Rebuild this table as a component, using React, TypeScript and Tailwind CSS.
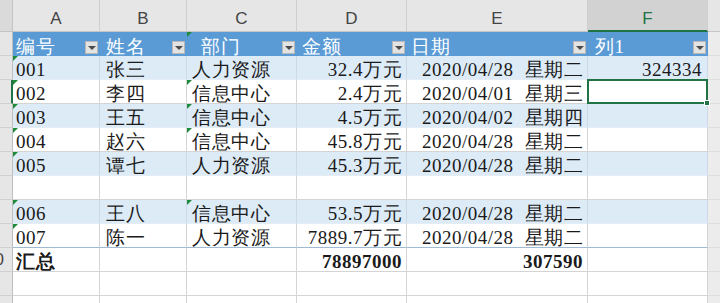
import React from "react";

type Row = {
  no: string;
  name: string;
  dept: string;
  amount: string;
  date: string;
  week: string;
  extra: string;
  band: boolean;
};

const rows: (Row | null)[] = [
  { no: "001", name: "张三", dept: "人力资源", amount: "32.4万元", date: "2020/04/28", week: "星期二", extra: "324334", band: true },
  { no: "002", name: "李四", dept: "信息中心", amount: "2.4万元", date: "2020/04/01", week: "星期三", extra: "", band: false },
  { no: "003", name: "王五", dept: "信息中心", amount: "4.5万元", date: "2020/04/02", week: "星期四", extra: "", band: true },
  { no: "004", name: "赵六", dept: "信息中心", amount: "45.8万元", date: "2020/04/28", week: "星期二", extra: "", band: false },
  { no: "005", name: "谭七", dept: "人力资源", amount: "45.3万元", date: "2020/04/28", week: "星期二", extra: "", band: true },
  null,
  { no: "006", name: "王八", dept: "信息中心", amount: "53.5万元", date: "2020/04/28", week: "星期二", extra: "", band: true },
  { no: "007", name: "陈一", dept: "人力资源", amount: "7889.7万元", date: "2020/04/28", week: "星期二", extra: "", band: false },
];

const GRID = "grid grid-cols-[13px_87px_87px_110px_110px_181px_120px_12px]";
const FONT = "[font-family:'Liberation_Serif',serif] text-[19px] tracking-[0.5px] text-[#1a1a1a]";
const SANS = "[font-family:'Liberation_Sans',sans-serif]";
const CELL = "relative h-[24px] border-r border-b whitespace-nowrap pt-[4px] leading-[20px]";
const ALIGN = ["pl-[3px]", "pl-[6px]", "pl-[5px]", "text-right pr-[4px]", "text-right pr-[4px]", "text-right pr-[5px]"];
const HEAD_PAD = ["pl-[3px]", "pl-[6px]", "pl-[14px]", "pl-[5px]", "pl-[4px]", "pl-[7px]"];

function Flag() {
  return <span className="absolute left-0 top-0 w-0 h-0 border-t-[5px] border-t-[#1f8a3b] border-r-[5px] border-r-transparent" />;
}

function FilterButton() {
  return (
    <span className="absolute right-[1px] bottom-[1px] w-[13px] h-[13px] bg-[#e3e3e3] border border-[#b8b8b8] flex items-center justify-center">
      <span className="w-0 h-0 border-l-[4px] border-r-[4px] border-t-[4px] border-l-transparent border-r-transparent border-t-[#4a4a4a]" />
    </span>
  );
}

function RowHead({ label, active }: { label?: string; active?: boolean }) {
  return (
    <div
      className={`h-[24px] flex justify-end border-b border-b-[#d0d0d0] bg-[#e6e6e6] overflow-hidden pr-[8px] pt-[2px] leading-[20px] text-[17px] tracking-normal text-[#444] ${SANS} ${
        active ? "border-r-2 border-r-[#217346]" : "border-r border-r-[#bfbfbf]"
      }`}
    >
      {label && <span className="shrink-0">{label}</span>}
    </div>
  );
}

function Strip() {
  return <div className="h-[24px] bg-[#ececec] border-b border-b-[#dedede]" />;
}

export default function App() {
  const letters = ["A", "B", "C", "D", "E", "F"];
  const heads = ["编号", "姓名", "部门", "金额", "日期", "列1"];

  return (
    <div className="w-[720px] h-[303px] overflow-hidden bg-white">
      {/* column letters */}
      <div className={GRID}>
        <div className="h-[32px] bg-[#dadada] border-r border-b border-[#c4c4c4]" />
        {letters.map((l) => (
          <div
            key={l}
            className={`h-[32px] text-center pt-[5px] leading-[27px] text-[17px] ${SANS} border-r border-r-[#cfcfcf] ${
              l === "F"
                ? "bg-[#d2d2d2] text-[#217346] border-b-2 border-b-[#217346]"
                : "bg-[#e6e6e6] text-[#444] border-b border-b-[#c4c4c4]"
            }`}
          >
            {l}
          </div>
        ))}
        <div className="h-[32px] bg-[#e6e6e6] border-b border-[#c4c4c4]" />
      </div>

      <div className={`${GRID} ${FONT}`}>
        {/* table header */}
        <RowHead />
        {heads.map((h, i) => (
          <div key={h} className={`${CELL} pt-[5px] bg-[#5b9bd5] border-[#5b9bd5] text-white ${HEAD_PAD[i]}`}>
            {i === 2 && <Flag />}
            {h}
            <FilterButton />
          </div>
        ))}
        <Strip />

        {rows.map((r, ri) => {
          const rowBg = r?.band ? "bg-[#ddebf7] border-r-[#cdd9e6] border-b-[#e4ecf5]" : "bg-white border-[#d4d4d4]";
          const last = ri === rows.length - 1;
          const vals = r
            ? [
                r.no,
                r.name,
                r.dept,
                r.amount,
                <>
                  {r.date}
                  <span className="ml-[11px]">{r.week}</span>
                </>,
                r.extra,
              ]
            : ["", "", "", "", "", ""];
          return (
            <React.Fragment key={ri}>
              <RowHead active={ri === 1} />
              {vals.map((v, ci) => (
                <div
                  key={ci}
                  className={`${CELL} ${rowBg} ${ALIGN[ci]} ${last ? "border-b-[#9fbad6]" : ""} ${
                    ri === 1 && ci === 5 ? "" : "overflow-hidden"
                  }`}
                >
                  {r && ci === 0 && <Flag />}
                  {r && ci === 2 && r.dept === "信息中心" && <Flag />}
                  {v}
                  {ri === 1 && ci === 5 && (
                    <span className="absolute inset-[-1px] z-10 border-2 border-[#217346]">
                      <span className="absolute right-[-4px] bottom-[-4px] w-[6px] h-[6px] bg-[#217346] border border-white" />
                    </span>
                  )}
                </div>
              ))}
              <Strip />
            </React.Fragment>
          );
        })}

        {/* totals */}
        <RowHead label="10" />
        {["汇总", "", "", "78897000", "307590", ""].map((v, ci) => (
          <div key={ci} className={`${CELL} overflow-hidden bg-white border-[#d4d4d4] font-bold ${ALIGN[ci]}`}>
            {v}
          </div>
        ))}
        <Strip />

        {[0, 1].map((k) => (
          <React.Fragment key={k}>
            <RowHead />
            {letters.map((l) => (
              <div key={l} className={`${CELL} bg-white border-[#d4d4d4]`} />
            ))}
            <Strip />
          </React.Fragment>
        ))}
      </div>
    </div>
  );
}
